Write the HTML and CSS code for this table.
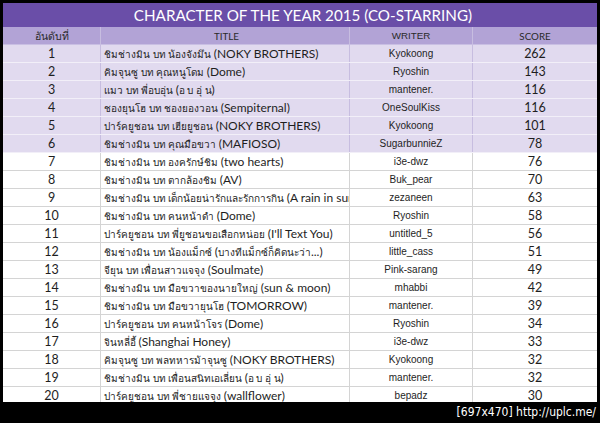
FILE: index.html
```html
<!DOCTYPE html>
<html lang="th">
<head>
<meta charset="utf-8">
<title>Character of the Year 2015</title>
<link rel="stylesheet" href="styles.css">
</head>
<body>
<div class="sheet">
  <div class="title">CHARACTER OF THE YEAR 2015 (CO-STARRING)</div>
  <div class="row head">
    <div class="c rank">อันดับที่</div>
    <div class="c name center">TITLE</div>
    <div class="c writer">WRITER</div>
    <div class="c score">SCORE</div>
  </div>
  <div class="row hl"><div class="c rank">1</div><div class="c name">ชิมช่างมิน บท น้องจังมึน <span class="en">(NOKY BROTHERS)</span></div><div class="c writer">Kyokoong</div><div class="c score">262</div></div>
  <div class="row hl"><div class="c rank">2</div><div class="c name">คิมจุนซู บท คุณหนูโดม <span class="en">(Dome)</span></div><div class="c writer">Ryoshin</div><div class="c score">143</div></div>
  <div class="row hl"><div class="c rank">3</div><div class="c name">แมว บท พี่อบอุ่น <span class="en">(</span>อ บ อุ่ น<span class="en">)</span></div><div class="c writer">mantener.</div><div class="c score">116</div></div>
  <div class="row hl"><div class="c rank">4</div><div class="c name">ชองยุนโฮ บท ชองยองวอน <span class="en">(Sempiternal)</span></div><div class="c writer">OneSoulKiss</div><div class="c score">116</div></div>
  <div class="row hl"><div class="c rank">5</div><div class="c name">ปาร์คยูชอน บท เฮียยูชอน <span class="en">(NOKY BROTHERS)</span></div><div class="c writer">Kyokoong</div><div class="c score">101</div></div>
  <div class="row hl"><div class="c rank">6</div><div class="c name">ชิมช่างมิน บท คุณมือขวา <span class="en">(MAFIOSO)</span></div><div class="c writer">SugarbunnieZ</div><div class="c score">78</div></div>
  <div class="row"><div class="c rank">7</div><div class="c name">ชิมช่างมิน บท องครักษ์ชิม <span class="en">(two hearts)</span></div><div class="c writer">i3e-dwz</div><div class="c score">76</div></div>
  <div class="row"><div class="c rank">8</div><div class="c name">ชิมช่างมิน บท ตากล้องชิม <span class="en">(AV)</span></div><div class="c writer">Buk_pear</div><div class="c score">70</div></div>
  <div class="row"><div class="c rank">9</div><div class="c name">ชิมช่างมิน บท เด็กน้อยน่ารักและรักการกิน <span class="en">(A rain in summer)</span></div><div class="c writer">zezaneen</div><div class="c score">63</div></div>
  <div class="row"><div class="c rank">10</div><div class="c name">ชิมช่างมิน บท คนหน้าดำ <span class="en">(Dome)</span></div><div class="c writer">Ryoshin</div><div class="c score">58</div></div>
  <div class="row"><div class="c rank">11</div><div class="c name">ปาร์คยูชอน บท พี่ยูชอนขอเสือกหน่อย <span class="en">(I'll Text You)</span></div><div class="c writer">untitled_5</div><div class="c score">56</div></div>
  <div class="row"><div class="c rank">12</div><div class="c name">ชิมช่างมิน บท น้องแม็กซ์ <span class="en">(</span>บางทีแม็กซ์ก็คิดนะว่า<span class="en">...)</span></div><div class="c writer">little_cass</div><div class="c score">51</div></div>
  <div class="row"><div class="c rank">13</div><div class="c name">จียุน บท เพื่อนสาวแจจุง <span class="en">(Soulmate)</span></div><div class="c writer">Pink-sarang</div><div class="c score">49</div></div>
  <div class="row"><div class="c rank">14</div><div class="c name">ชิมช่างมิน บท มือขวาของนายใหญ่ <span class="en">(sun &amp; moon)</span></div><div class="c writer">mhabbi</div><div class="c score">42</div></div>
  <div class="row"><div class="c rank">15</div><div class="c name">ชิมช่างมิน บท มือขวายุนโฮ <span class="en">(TOMORROW)</span></div><div class="c writer">mantener.</div><div class="c score">39</div></div>
  <div class="row"><div class="c rank">16</div><div class="c name">ปาร์คยูชอน บท คนหน้าโจร <span class="en">(Dome)</span></div><div class="c writer">Ryoshin</div><div class="c score">34</div></div>
  <div class="row"><div class="c rank">17</div><div class="c name">จินหลี่อี้ <span class="en">(Shanghai Honey)</span></div><div class="c writer">i3e-dwz</div><div class="c score">33</div></div>
  <div class="row"><div class="c rank">18</div><div class="c name">คิมจุนซู บท พลทหารม้าจุนซู <span class="en">(NOKY BROTHERS)</span></div><div class="c writer">Kyokoong</div><div class="c score">32</div></div>
  <div class="row"><div class="c rank">19</div><div class="c name">ชิมช่างมิน บท เพื่อนสนิทเอเลี่ยน <span class="en">(</span>อ บ อุ่ น<span class="en">)</span></div><div class="c writer">mantener.</div><div class="c score">32</div></div>
  <div class="row"><div class="c rank">20</div><div class="c name">ปาร์คยูชอน บท พี่ชายแจจุง <span class="en">(wallflower)</span></div><div class="c writer">bepadz</div><div class="c score">30</div></div>
</div>
<div class="stamp">[697x470] http://uplc.me/</div>
</body>
</html>
```
FILE: styles.css
```css
html, body {
  margin: 0;
  padding: 0;
  background: #000;
}
body {
  width: 600px;
  height: 423px;
  overflow: hidden;
  position: relative;
  padding: 3px 3px 0 3px;
  box-sizing: border-box;
}
.sheet {
  width: 594px;
  background: #fff;
}
.title {
  height: 24px;
  background: #6a4ea8;
  color: #fff;
  font-family: "Lato", "Open Sans", sans-serif;
  font-size: 15.2px;
  line-height: 25px;
  text-align: center;
  padding-left: 6px;
}
.row {
  display: grid;
  grid-template-columns: 98px 249px 123px 124px;
  height: 18px;
  border-bottom: 1px solid #d4d4d4;
  box-sizing: border-box;
  background: #fff;
  color: #1e1e1e;
}
.row.head {
  background: #b2a3d6;
  border-bottom-color: #c9bfe3;
  color: #2a2a2a;
}
.row.hl {
  background: #e1daef;
  border-bottom-color: #f2eff8;
}
.c {
  border-right: 1px solid #d4d4d4;
  line-height: 18px;
  white-space: nowrap;
  overflow: hidden;
  font-family: "Lato", "Open Sans", sans-serif;
  font-size: 11.4px;
}
.row.hl .c, .row.head .c {
  border-right-color: #c7bde0;
}
.c:last-child {
  border-right: none;
}
.rank, .score, .center {
  text-align: center;
}
.rank, .score {
  font-size: 12.5px;
}
.name {
  padding-left: 3px;
  font-size: 10px;
}
.name .en {
  font-size: 12px;
}
.writer {
  text-align: center;
  font-family: "Liberation Sans", Arial, sans-serif;
  font-size: 10px;
}
.row.head .c {
  font-size: 9.8px;
}
.row.head .rank {
  font-size: 10.5px;
}
.stamp {
  position: absolute;
  left: 0;
  right: 0;
  bottom: 0;
  height: 21px;
  background: #000;
  color: #fff;
  font-family: "DejaVu Sans Condensed", "DejaVu Sans", sans-serif;
  font-size: 12px;
  line-height: 21px;
  text-align: right;
  padding-right: 4px;
}
```
